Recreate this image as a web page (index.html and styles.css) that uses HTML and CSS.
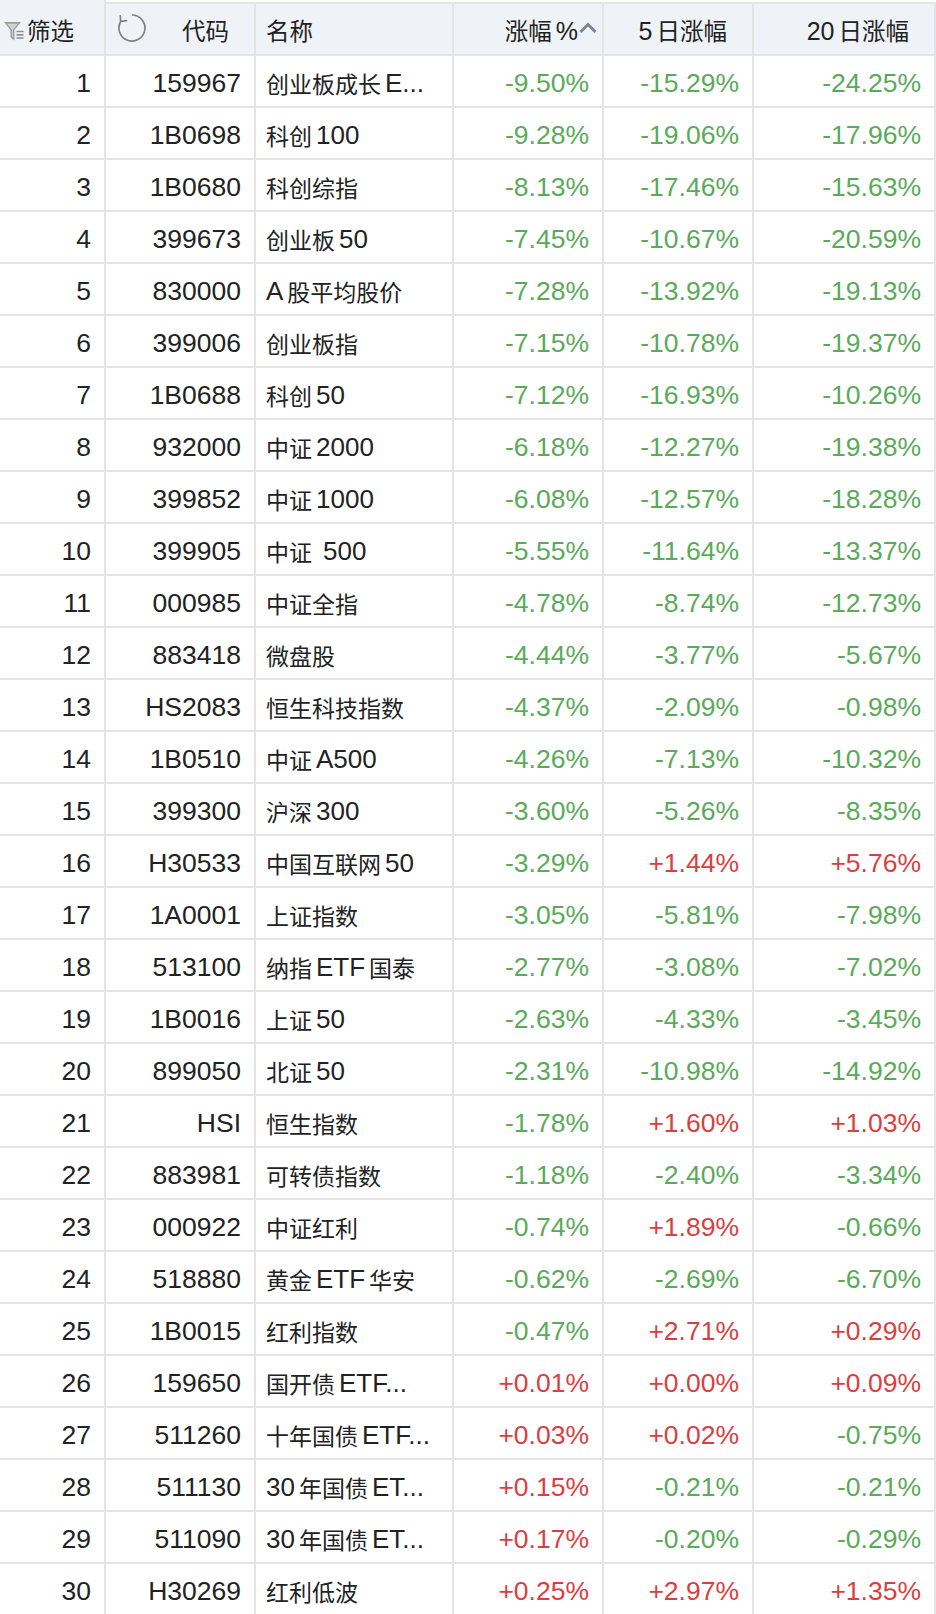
FILE: index.html
```html
<!DOCTYPE html>
<html lang="zh-CN">
<head>
<meta charset="utf-8">
<title>涨幅排行</title>
<link rel="stylesheet" href="styles.css">
</head>
<body>
<div class="tbl">
  <div class="row head">
    <div class="c c1 h1">
      <svg class="funnel" viewBox="0 0 22 24" width="22" height="24">
        <path d="M1 3 H18 L11.5 11 V21.5 L7.5 18.5 V11 Z" fill="#9d9d9d"/>
        <path d="M4 4.8 H15 L10 10.8 V18.5 L9 17.8 V10.8 Z" fill="#d2d2d2"/>
        <path d="M13.5 12.5 H20.5 M13.5 15.8 H20.5 M13.5 19 H20.5" stroke="#8e8e8e" stroke-width="1.7"/>
      </svg>
      <span>筛选</span>
    </div>
    <div class="c c2 h2">
      <svg class="refresh" viewBox="0 0 32 32" width="32" height="32">
        <path d="M16 3 A13 13 0 1 1 4.7 9.5" fill="none" stroke="#808080" stroke-width="1.7"/>
        <path d="M4.2 3.8 L4.7 9.5 L10.4 8.7" fill="none" stroke="#808080" stroke-width="1.7" stroke-linejoin="round" stroke-linecap="round"/>
      </svg>
      <span>代码</span>
    </div>
    <div class="c c3 hl"><span>名称</span></div>
    <div class="c c4 hr sorted"><span>涨幅<span class="lat ml">%</span></span>
      <svg class="caret" viewBox="0 0 20 13" width="20" height="13"><path d="M2.5 11 L10 3.5 L17.5 11" fill="none" stroke="#7b8494" stroke-width="2.8"/></svg>
    </div>
    <div class="c c5 hr"><span><span class="lat mr">5</span>日涨幅</span></div>
    <div class="c c6 hr"><span><span class="lat mr">20</span>日涨幅</span></div>
  </div>

  <div class="row"><div class="c c1 num">1</div><div class="c c2 num">159967</div><div class="c c3 name">创业板成长<span class="lat ml">E...</span></div><div class="c c4 num dn">-9.50%</div><div class="c c5 num dn">-15.29%</div><div class="c c6 num dn">-24.25%</div></div>
  <div class="row"><div class="c c1 num">2</div><div class="c c2 num">1B0698</div><div class="c c3 name">科创<span class="lat ml">100</span></div><div class="c c4 num dn">-9.28%</div><div class="c c5 num dn">-19.06%</div><div class="c c6 num dn">-17.96%</div></div>
  <div class="row"><div class="c c1 num">3</div><div class="c c2 num">1B0680</div><div class="c c3 name">科创综指</div><div class="c c4 num dn">-8.13%</div><div class="c c5 num dn">-17.46%</div><div class="c c6 num dn">-15.63%</div></div>
  <div class="row"><div class="c c1 num">4</div><div class="c c2 num">399673</div><div class="c c3 name">创业板<span class="lat ml">50</span></div><div class="c c4 num dn">-7.45%</div><div class="c c5 num dn">-10.67%</div><div class="c c6 num dn">-20.59%</div></div>
  <div class="row"><div class="c c1 num">5</div><div class="c c2 num">830000</div><div class="c c3 name"><span class="lat mr">A</span>股平均股价</div><div class="c c4 num dn">-7.28%</div><div class="c c5 num dn">-13.92%</div><div class="c c6 num dn">-19.13%</div></div>
  <div class="row"><div class="c c1 num">6</div><div class="c c2 num">399006</div><div class="c c3 name">创业板指</div><div class="c c4 num dn">-7.15%</div><div class="c c5 num dn">-10.78%</div><div class="c c6 num dn">-19.37%</div></div>
  <div class="row"><div class="c c1 num">7</div><div class="c c2 num">1B0688</div><div class="c c3 name">科创<span class="lat ml">50</span></div><div class="c c4 num dn">-7.12%</div><div class="c c5 num dn">-16.93%</div><div class="c c6 num dn">-10.26%</div></div>
  <div class="row"><div class="c c1 num">8</div><div class="c c2 num">932000</div><div class="c c3 name">中证<span class="lat ml">2000</span></div><div class="c c4 num dn">-6.18%</div><div class="c c5 num dn">-12.27%</div><div class="c c6 num dn">-19.38%</div></div>
  <div class="row"><div class="c c1 num">9</div><div class="c c2 num">399852</div><div class="c c3 name">中证<span class="lat ml">1000</span></div><div class="c c4 num dn">-6.08%</div><div class="c c5 num dn">-12.57%</div><div class="c c6 num dn">-18.28%</div></div>
  <div class="row"><div class="c c1 num">10</div><div class="c c2 num">399905</div><div class="c c3 name">中证<span class="lat ml2">500</span></div><div class="c c4 num dn">-5.55%</div><div class="c c5 num dn">-11.64%</div><div class="c c6 num dn">-13.37%</div></div>
  <div class="row"><div class="c c1 num">11</div><div class="c c2 num">000985</div><div class="c c3 name">中证全指</div><div class="c c4 num dn">-4.78%</div><div class="c c5 num dn">-8.74%</div><div class="c c6 num dn">-12.73%</div></div>
  <div class="row"><div class="c c1 num">12</div><div class="c c2 num">883418</div><div class="c c3 name">微盘股</div><div class="c c4 num dn">-4.44%</div><div class="c c5 num dn">-3.77%</div><div class="c c6 num dn">-5.67%</div></div>
  <div class="row"><div class="c c1 num">13</div><div class="c c2 num">HS2083</div><div class="c c3 name">恒生科技指数</div><div class="c c4 num dn">-4.37%</div><div class="c c5 num dn">-2.09%</div><div class="c c6 num dn">-0.98%</div></div>
  <div class="row"><div class="c c1 num">14</div><div class="c c2 num">1B0510</div><div class="c c3 name">中证<span class="lat ml">A500</span></div><div class="c c4 num dn">-4.26%</div><div class="c c5 num dn">-7.13%</div><div class="c c6 num dn">-10.32%</div></div>
  <div class="row"><div class="c c1 num">15</div><div class="c c2 num">399300</div><div class="c c3 name">沪深<span class="lat ml">300</span></div><div class="c c4 num dn">-3.60%</div><div class="c c5 num dn">-5.26%</div><div class="c c6 num dn">-8.35%</div></div>
  <div class="row"><div class="c c1 num">16</div><div class="c c2 num">H30533</div><div class="c c3 name">中国互联网<span class="lat ml">50</span></div><div class="c c4 num dn">-3.29%</div><div class="c c5 num up">+1.44%</div><div class="c c6 num up">+5.76%</div></div>
  <div class="row"><div class="c c1 num">17</div><div class="c c2 num">1A0001</div><div class="c c3 name">上证指数</div><div class="c c4 num dn">-3.05%</div><div class="c c5 num dn">-5.81%</div><div class="c c6 num dn">-7.98%</div></div>
  <div class="row"><div class="c c1 num">18</div><div class="c c2 num">513100</div><div class="c c3 name">纳指<span class="lat ml mr">ETF</span>国泰</div><div class="c c4 num dn">-2.77%</div><div class="c c5 num dn">-3.08%</div><div class="c c6 num dn">-7.02%</div></div>
  <div class="row"><div class="c c1 num">19</div><div class="c c2 num">1B0016</div><div class="c c3 name">上证<span class="lat ml">50</span></div><div class="c c4 num dn">-2.63%</div><div class="c c5 num dn">-4.33%</div><div class="c c6 num dn">-3.45%</div></div>
  <div class="row"><div class="c c1 num">20</div><div class="c c2 num">899050</div><div class="c c3 name">北证<span class="lat ml">50</span></div><div class="c c4 num dn">-2.31%</div><div class="c c5 num dn">-10.98%</div><div class="c c6 num dn">-14.92%</div></div>
  <div class="row"><div class="c c1 num">21</div><div class="c c2 num">HSI</div><div class="c c3 name">恒生指数</div><div class="c c4 num dn">-1.78%</div><div class="c c5 num up">+1.60%</div><div class="c c6 num up">+1.03%</div></div>
  <div class="row"><div class="c c1 num">22</div><div class="c c2 num">883981</div><div class="c c3 name">可转债指数</div><div class="c c4 num dn">-1.18%</div><div class="c c5 num dn">-2.40%</div><div class="c c6 num dn">-3.34%</div></div>
  <div class="row"><div class="c c1 num">23</div><div class="c c2 num">000922</div><div class="c c3 name">中证红利</div><div class="c c4 num dn">-0.74%</div><div class="c c5 num up">+1.89%</div><div class="c c6 num dn">-0.66%</div></div>
  <div class="row"><div class="c c1 num">24</div><div class="c c2 num">518880</div><div class="c c3 name">黄金<span class="lat ml mr">ETF</span>华安</div><div class="c c4 num dn">-0.62%</div><div class="c c5 num dn">-2.69%</div><div class="c c6 num dn">-6.70%</div></div>
  <div class="row"><div class="c c1 num">25</div><div class="c c2 num">1B0015</div><div class="c c3 name">红利指数</div><div class="c c4 num dn">-0.47%</div><div class="c c5 num up">+2.71%</div><div class="c c6 num up">+0.29%</div></div>
  <div class="row"><div class="c c1 num">26</div><div class="c c2 num">159650</div><div class="c c3 name">国开债<span class="lat ml">ETF...</span></div><div class="c c4 num up">+0.01%</div><div class="c c5 num up">+0.00%</div><div class="c c6 num up">+0.09%</div></div>
  <div class="row"><div class="c c1 num">27</div><div class="c c2 num">511260</div><div class="c c3 name">十年国债<span class="lat ml">ETF...</span></div><div class="c c4 num up">+0.03%</div><div class="c c5 num up">+0.02%</div><div class="c c6 num dn">-0.75%</div></div>
  <div class="row"><div class="c c1 num">28</div><div class="c c2 num">511130</div><div class="c c3 name"><span class="lat mr">30</span>年国债<span class="lat ml">ET...</span></div><div class="c c4 num up">+0.15%</div><div class="c c5 num dn">-0.21%</div><div class="c c6 num dn">-0.21%</div></div>
  <div class="row"><div class="c c1 num">29</div><div class="c c2 num">511090</div><div class="c c3 name"><span class="lat mr">30</span>年国债<span class="lat ml">ET...</span></div><div class="c c4 num up">+0.17%</div><div class="c c5 num dn">-0.20%</div><div class="c c6 num dn">-0.29%</div></div>
  <div class="row"><div class="c c1 num">30</div><div class="c c2 num">H30269</div><div class="c c3 name">红利低波</div><div class="c c4 num up">+0.25%</div><div class="c c5 num up">+2.97%</div><div class="c c6 num up">+1.35%</div></div>
</div>
</body>
</html>
```

FILE: styles.css
```css
html, body {
  margin: 0;
  padding: 0;
  background: #ffffff;
}

body {
  width: 936px;
  height: 1614px;
  overflow: hidden;
  font-family: "Noto Sans CJK SC", "Liberation Sans", sans-serif;
  color: #222222;
}

.tbl {
  width: 936px;
}

.row {
  display: grid;
  grid-template-columns: 106px 150px 198px 150px 150px 182px;
  height: 52px;
}

.c {
  box-sizing: border-box;
  border-right: 2px solid #e4e4e4;
  border-bottom: 2px solid #e4e4e4;
  display: flex;
  align-items: center;
  white-space: nowrap;
  overflow: hidden;
  padding-top: 4px;
}

.head {
  height: 56px;
}

.head .c {
  background: #eff2f6;
  font-size: 23.5px;
  color: #222222;
  border-top: 2px solid #e4e4e4;
  margin-top: 2px;
  height: 54px;
  padding-top: 2px;
}

.head .h1 {
  border-top: none;
  margin-top: 0;
  height: 56px;
  padding-left: 3px;
  padding-top: 6px;
  gap: 2px;
}

.funnel {
  flex: none;
  margin-top: 1px;
}

.head .h2 {
  justify-content: space-between;
  padding-left: 10px;
  padding-right: 25px;
}

.refresh {
  flex: none;
  margin-top: -4px;
}

.head .hl {
  padding-left: 10px;
}

.head .hr {
  justify-content: flex-end;
  padding-right: 25px;
}

.head .sorted {
  padding-right: 4px;
}

.caret {
  flex: none;
  margin-left: 0;
  margin-bottom: 5px;
}

.num {
  justify-content: flex-end;
  padding-right: 13px;
  font-family: "Liberation Sans", "Noto Sans CJK SC", sans-serif;
  font-size: 26.5px;
}

.name {
  padding-left: 10px;
  font-size: 23px;
}

.lat {
  font-family: "Liberation Sans", sans-serif;
  font-size: 26px;
}

.head .lat {
  font-size: 25px;
}

.ml {
  margin-left: 4px;
}

.ml2 {
  margin-left: 11px;
}

.mr {
  margin-right: 4px;
}

.dn {
  color: #5aaa5a;
}

.up {
  color: #da3f3f;
}
```
